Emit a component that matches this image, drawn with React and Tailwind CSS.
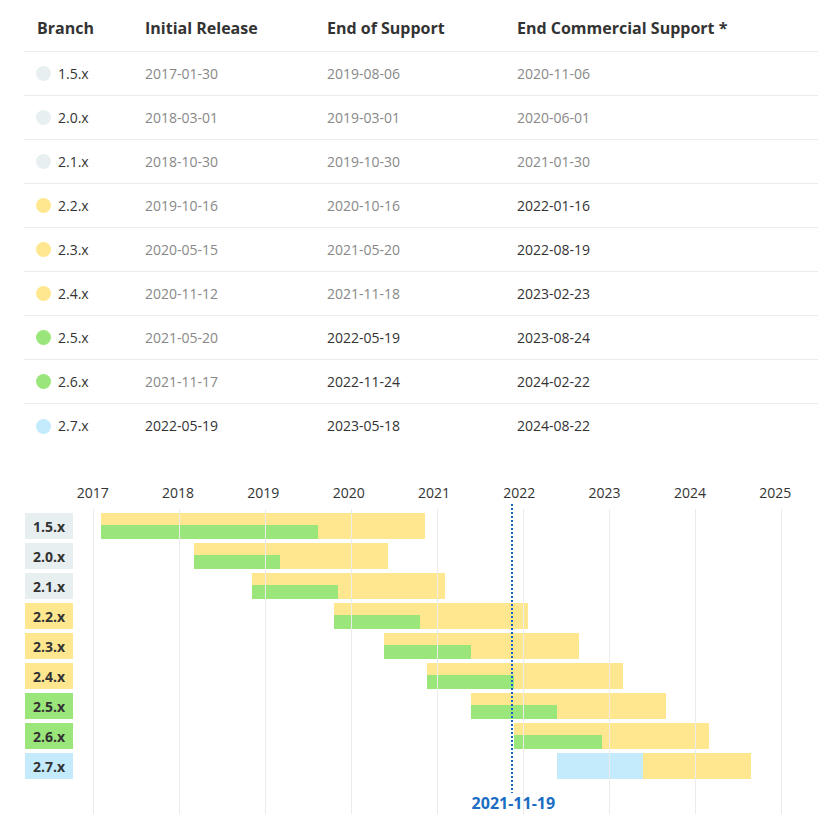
import React from "react";

const DOT = {
  grey: "bg-[#e8eff0]",
  yellow: "bg-[#ffe78f]",
  green: "bg-[#9be67b]",
  blue: "bg-[#c4ebfc]",
};

const rows = [
  ["1.5.x", "grey", "2017-01-30", "2019-08-06", "2020-11-06"],
  ["2.0.x", "grey", "2018-03-01", "2019-03-01", "2020-06-01"],
  ["2.1.x", "grey", "2018-10-30", "2019-10-30", "2021-01-30"],
  ["2.2.x", "yellow", "2019-10-16", "2020-10-16", "2022-01-16"],
  ["2.3.x", "yellow", "2020-05-15", "2021-05-20", "2022-08-19"],
  ["2.4.x", "yellow", "2020-11-12", "2021-11-18", "2023-02-23"],
  ["2.5.x", "green", "2021-05-20", "2022-05-19", "2023-08-24"],
  ["2.6.x", "green", "2021-11-17", "2022-11-24", "2024-02-22"],
  ["2.7.x", "blue", "2022-05-19", "2023-05-18", "2024-08-22"],
];

const TODAY = "2021-11-19";

// x position relative to the chart container (which starts at page x=24)
function px(d) {
  const dt = new Date(d + "T00:00:00Z");
  const y = dt.getUTCFullYear();
  const s = Date.UTC(y, 0, 1);
  const e = Date.UTC(y + 1, 0, 1);
  return 70.5 + (y - 2017 + (dt.getTime() - s) / (e - s)) * 86;
}

function DateCell({ d }) {
  return (
    <div className={d > TODAY ? "text-[#333333]" : "text-[#888888]"}>{d}</div>
  );
}

export default function App() {
  const years = [2017, 2018, 2019, 2020, 2021, 2022, 2023, 2024, 2025];
  const t = px(TODAY) - 2;
  return (
    <div className="w-[834px] bg-white pl-[24px] pr-[16px] font-['Open_Sans',sans-serif]">
      {/* Table */}
      <div className="w-[794px]">
        <div className="grid h-[52px] grid-cols-[108px_182px_190px_1fr] items-center border-b border-[#e9eced] pl-[13px] pt-[5px] text-[16px] font-bold leading-[24px] text-[#333333]">
          <div>Branch</div>
          <div>Initial Release</div>
          <div>End of Support</div>
          <div>End Commercial Support *</div>
        </div>
        {rows.map((r, i) => (
          <div
            key={r[0]}
            className={`grid h-[44px] grid-cols-[109px_182px_190px_1fr] items-center pl-[12px] text-[14px] leading-[20px] ${
              i < rows.length - 1 ? "border-b border-[#e9eced]" : ""
            }`}
          >
            <div className="flex items-center gap-[7px] text-[#333333]">
              <span className={`block h-[15px] w-[15px] rounded-full ${DOT[r[1]]}`} />
              <span>{r[0]}</span>
            </div>
            <DateCell d={r[2]} />
            <DateCell d={r[3]} />
            <DateCell d={r[4]} />
          </div>
        ))}
      </div>

      {/* Chart */}
      <div className="relative h-[384px] w-[794px]">
        {/* year axis */}
        <div className="flex pl-[26px] pt-[35px]">
          {years.map((y) => (
            <div
              key={y}
              className="w-[86px] text-center text-[14px] leading-[20px] text-[#333333]"
            >
              {y}
            </div>
          ))}
        </div>

        {/* rows */}
        <div className="mt-[10px] flex flex-col gap-[4px]">
          {rows.map((r) => {
            const s = px(r[2]);
            const m = px(r[3]);
            const e = px(r[4]);
            const isBlue = r[1] === "blue";
            return (
              <div key={r[0]} className="relative h-[26px]">
                <div
                  className={`ml-[1px] flex h-[26px] w-[48px] items-center justify-center text-[14px] font-bold text-[#333333] ${DOT[r[1]]}`}
                >
                  {r[0]}
                </div>
                <div
                  className="absolute top-0 h-[26px] bg-[#ffe78f]"
                  style={{ left: s, width: e - s }}
                />
                <div
                  className={
                    isBlue
                      ? "absolute top-0 h-[26px] bg-[#c4ebfc]"
                      : "absolute top-[12px] h-[14px] bg-[#9be67b]"
                  }
                  style={{ left: s, width: m - s }}
                />
              </div>
            );
          })}
        </div>

        {/* grid lines over the bars */}
        <div className="pointer-events-none absolute left-[69px] top-[61px] flex h-[305px]">
          {years.map((y) => (
            <div key={"g" + y} className="h-full w-[86px] border-l border-[#ebebeb]" />
          ))}
        </div>

        {/* today marker */}
        <svg
          className="absolute top-[55px]"
          style={{ left: t - 2 }}
          width="4"
          height="291"
        >
          <line
            x1="2"
            y1="1"
            x2="2"
            y2="290"
            stroke="#1565c0"
            strokeWidth="2"
            strokeDasharray="2 2"
          />
        </svg>
        <div
          className="absolute top-[345px] w-[100px] text-center text-[16px] font-bold leading-[20px] text-[#1a6dc2]"
          style={{ left: t + 1 - 50 }}
        >
          {TODAY}
        </div>
      </div>
    </div>
  );
}
